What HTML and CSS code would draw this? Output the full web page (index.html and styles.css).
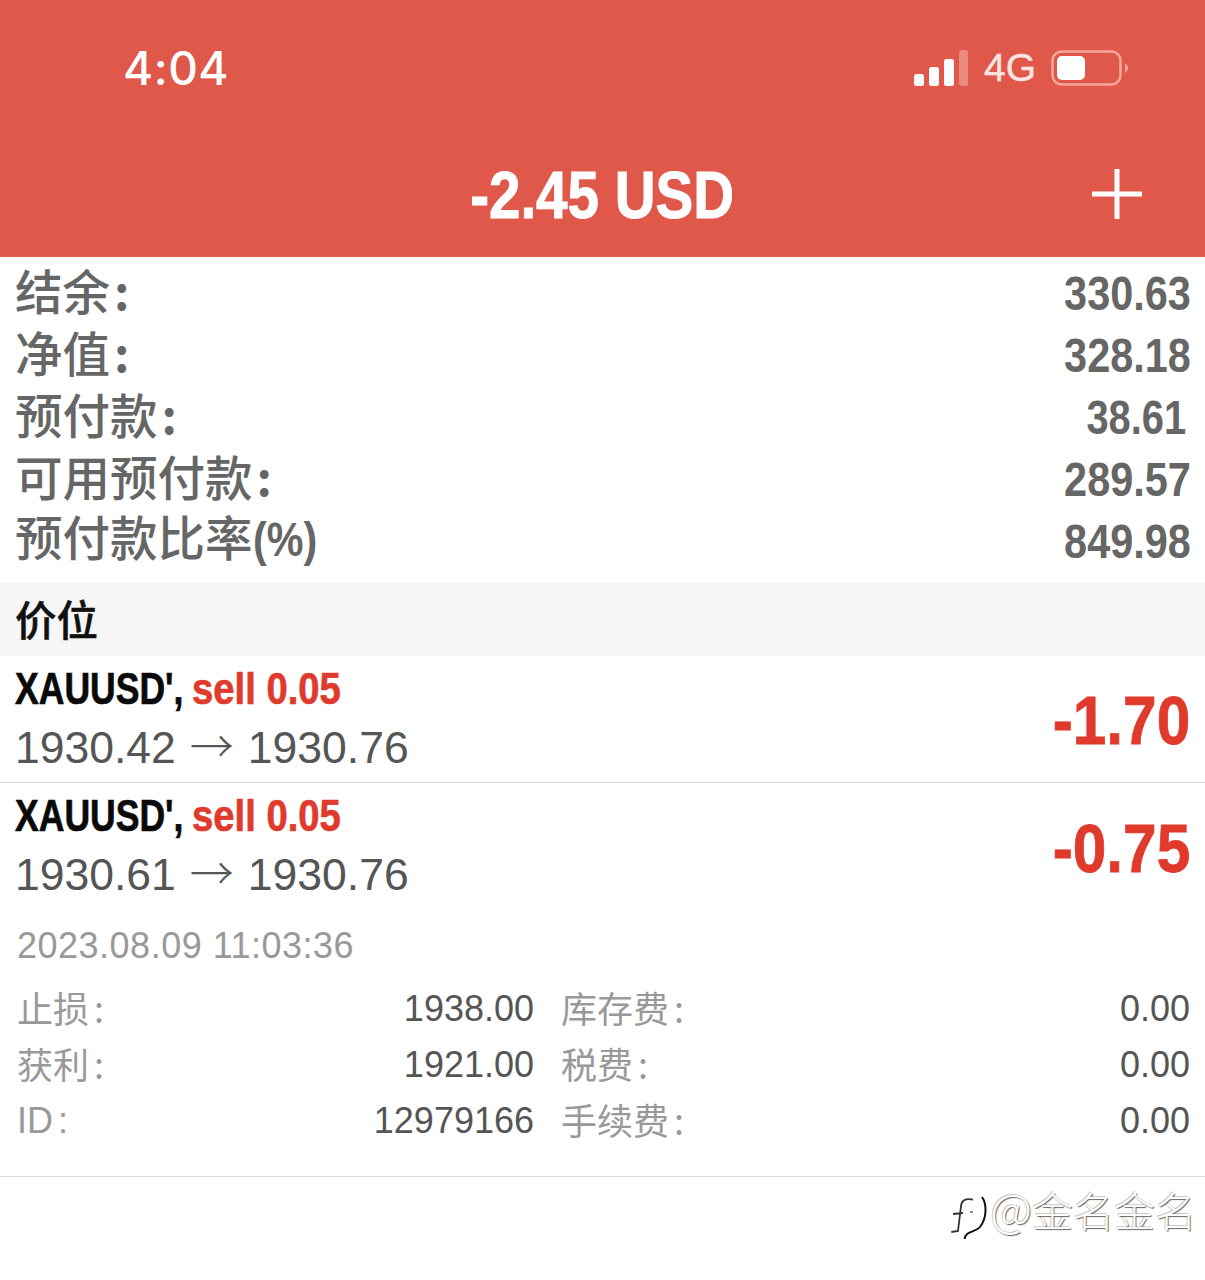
FILE: index.html
```html
<!DOCTYPE html>
<html lang="zh-CN">
<head>
    <meta charset="UTF-8">
    <meta name="viewport" content="width=device-width, initial-scale=1.0">
    <title>交易</title>
    <link rel="stylesheet" href="styles.css">
</head>
<body>
    <header class="header">
        <div class="statusbar">
            <span class="clock">4:04</span>
            <div class="status-icons">
                <svg class="signal" width="56" height="38" viewBox="0 0 56 38">
                    <rect x="1" y="25" width="10" height="12" rx="2.5" fill="#fff"/>
                    <rect x="16" y="18" width="10" height="19" rx="2.5" fill="#fff"/>
                    <rect x="31" y="10" width="10" height="27" rx="2.5" fill="#fff"/>
                    <rect x="46" y="1" width="9" height="36" rx="2.5" fill="#fff" opacity="0.3"/>
                </svg>
                <span class="network">4G</span>
                <svg class="battery" width="78" height="38" viewBox="0 0 78 38">
                    <rect x="1.5" y="2.5" width="68" height="33" rx="9" fill="none" stroke="#f6a79d" stroke-width="2.5"/>
                    <rect x="6" y="7" width="28" height="24" rx="5" fill="#fff"/>
                    <path d="M74 14 q6 5 0 10 z" fill="#f6a79d"/>
                </svg>
            </div>
        </div>
        <div class="titlebar">
            <h1 class="total">-2.45 USD</h1>
            <svg class="add" width="52" height="52" viewBox="0 0 52 52">
                <path d="M26 1V51M1 26H51" stroke="#fff" stroke-width="5"/>
            </svg>
        </div>
    </header>

    <section class="summary">
        <div class="summary-row"><span class="cjk">结余<span class="colon">:</span></span><span class="num">330.63</span></div>
        <div class="summary-row"><span class="cjk">净值<span class="colon">:</span></span><span class="num">328.18</span></div>
        <div class="summary-row"><span class="cjk">预付款<span class="colon">:</span></span><span class="num inset">38.61</span></div>
        <div class="summary-row"><span class="cjk">可用预付款<span class="colon">:</span></span><span class="num">289.57</span></div>
        <div class="summary-row"><span class="cjk">预付款比率<span class="narrow">(%)</span></span><span class="num">849.98</span></div>
    </section>

    <h2 class="section-title">价位</h2>

    <section class="positions">
        <div class="position">
            <div class="position-info">
                <div class="symbol"><span class="name">XAUUSD',</span><span class="side">sell 0.05</span></div>
                <div class="prices">1930.42<span class="arrow">→</span>1930.76</div>
            </div>
            <div class="profit">-1.70</div>
        </div>
        <div class="position">
            <div class="position-info">
                <div class="symbol"><span class="name">XAUUSD',</span><span class="side">sell 0.05</span></div>
                <div class="prices">1930.61<span class="arrow">→</span>1930.76</div>
            </div>
            <div class="profit">-0.75</div>
        </div>
    </section>

    <section class="details">
        <div class="opened">2023.08.09 11:03:36</div>
        <div class="detail-grid">
            <span class="detail-label">止损<span class="colon">:</span></span><span class="detail-value">1938.00</span>
            <span class="detail-label second">库存费<span class="colon">:</span></span><span class="detail-value">0.00</span>
            <span class="detail-label">获利<span class="colon">:</span></span><span class="detail-value">1921.00</span>
            <span class="detail-label second">税费<span class="colon">:</span></span><span class="detail-value">0.00</span>
            <span class="detail-label latin">ID<span class="colon">:</span></span><span class="detail-value">12979166</span>
            <span class="detail-label second">手续费<span class="colon">:</span></span><span class="detail-value">0.00</span>
        </div>
    </section>

    <footer class="footer">
        <svg class="mark" width="40" height="50" viewBox="0 0 40 50">
            <path d="M23 5.7C15 4 11.500 7 11 12L8 37L1.300 38M3 20L13 19" fill="none" stroke="#333" stroke-width="1.800"/>
            <path d="M32 3C37 10 37 24 30 33C26 38 15 37 14.700 45" fill="none" stroke="#111" stroke-width="2"/>
            <path d="M20 18h3" stroke="#666" stroke-width="1.500"/>
        </svg>
        <span class="watermark"><span class="at">@</span>金名金名</span>
    </footer>
</body>
</html>
```

FILE: styles.css
```css
* {
    box-sizing: border-box;
}

body {
    margin: 0;
    background-color: #ffffff;
    font-family: "Liberation Sans", "Noto Sans CJK SC", sans-serif;
    color: #555555;
}

.header {
    height: 257px;
    background-color: #df584a;
    color: #ffffff;
}

.statusbar {
    display: flex;
    justify-content: space-between;
    align-items: center;
    height: 136px;
    padding: 0 76px 0 123px;
}

.clock {
    font-family: Inter, sans-serif;
    font-size: 46px;
    font-weight: 500;
    letter-spacing: 0.500px;
}

.status-icons {
    display: flex;
    align-items: center;
    gap: 15px;
}

.network {
    font-size: 39px;
    color: #fbe4e1;
    -webkit-text-stroke: 0.400px #fbe4e1;
}

.titlebar {
    position: relative;
    display: flex;
    justify-content: center;
}

.total {
    margin: 0;
    font-size: 66px;
    line-height: 118px;
    font-weight: bold;
    -webkit-text-stroke: 1px #ffffff;
    transform: scaleX(0.856);
}

.add {
    position: absolute;
    right: 62px;
    top: 32px;
}

.summary {
    padding: 5px 15px 11px 15px;
}

.summary-row {
    display: flex;
    justify-content: space-between;
    align-items: center;
    height: 62px;
    font-size: 48px;
    font-weight: bold;
    color: #666666;
}

.num {
    display: inline-block;
    margin-right: -1px;
    transform: scaleX(0.863);
    transform-origin: right center;
}

.cjk {
    padding-bottom: 7px;
    font-family: "Noto Sans CJK SC", sans-serif;
    font-size: 47.500px;
    line-height: 50px;
    font-weight: 500;
}

.colon {
    margin-left: 4px;
    font-weight: bold;
}

.narrow {
    display: inline-block;
    font-family: "Liberation Sans", sans-serif;
    font-size: 48px;
    line-height: 1;
    font-weight: bold;
    transform: scaleX(0.86);
    transform-origin: left center;
}

.inset {
    margin-right: 4px;
    transform: scaleX(0.83);
}

.section-title {
    margin: 0;
    height: 73px;
    padding-left: 15px;
    background-color: #f6f6f6;
    font-family: "Noto Sans CJK SC", sans-serif;
    font-size: 41.500px;
    line-height: 70px;
    font-weight: 500;
    color: #111111;
    -webkit-text-stroke: 0.500px #111111;
}

.position {
    display: flex;
    justify-content: space-between;
    align-items: center;
    height: 127px;
    padding: 0 15px;
    border-bottom: 1px solid #d9d9d9;
}

.position:last-child {
    border-bottom: none;
}

.position-info {
    padding-bottom: 2px;
}

.symbol {
    font-size: 45px;
    line-height: 58px;
    font-weight: bold;
    color: #0a0a0a;
    white-space: nowrap;
    -webkit-text-stroke: 0.700px;
}

.name {
    display: inline-block;
    transform: scaleX(0.79);
    transform-origin: left center;
}

.side {
    display: inline-block;
    margin-left: -36px;
    color: #e03a2d;
    transform: scaleX(0.85);
    transform-origin: left center;
}

.prices {
    font-size: 44.500px;
    line-height: 59px;
    color: #555555;
}

.arrow {
    margin: 0 14px;
    font-family: "Noto Sans CJK SC", sans-serif;
    font-size: 44px;
    line-height: 0;
    font-weight: 300;
}

.profit {
    padding-top: 3px;
    font-size: 69px;
    font-weight: bold;
    color: #e03a2d;
    -webkit-text-stroke: 0.800px #e03a2d;
    transform: scaleX(0.875);
    transform-origin: right center;
}

.details {
    height: 267px;
    padding: 15px 15px 0 17px;
    border-bottom: 1px solid #d9d9d9;
}

.opened {
    font-size: 36px;
    line-height: 42px;
    letter-spacing: 0.500px;
    color: #999999;
}

.detail-grid {
    display: grid;
    grid-template-columns: 220px 297px 1fr auto;
    grid-auto-rows: 56px;
    align-items: center;
    margin-top: 14px;
}

.detail-label {
    padding-bottom: 5px;
    font-family: "Noto Sans CJK SC", sans-serif;
    font-size: 36px;
    line-height: 46px;
    color: #999999;
}

.detail-label.latin {
    padding-bottom: 0;
    font-family: "Liberation Sans", sans-serif;
}

.detail-label .colon {
    margin-left: 5px;
    font-weight: normal;
}

.second {
    padding-left: 27px;
}

.detail-value {
    font-size: 36px;
    text-align: right;
    color: #555555;
}

.footer {
    display: flex;
    justify-content: flex-end;
    align-items: flex-start;
    padding: 0 9px 0 0;
}

.mark {
    margin-top: 17px;
}

.watermark {
    margin-top: -3px;
    font-family: "Noto Sans CJK SC", sans-serif;
    font-size: 41px;
    font-weight: 300;
    color: #ffffff;
    text-shadow: 1px 1px 1px #666666, -1px -1px 0 #cccccc;
}

.at {
    font-size: 46px;
}
```
